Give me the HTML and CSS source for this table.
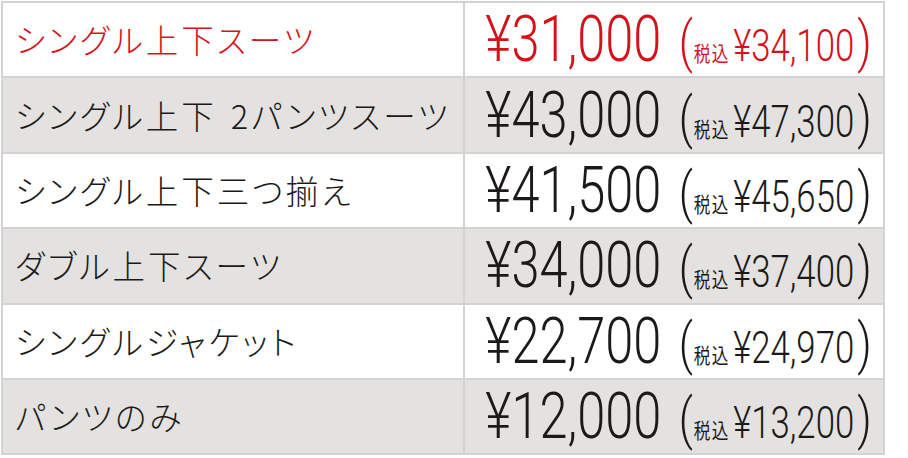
FILE: index.html
```html
<!DOCTYPE html>
<html lang="ja">
<head>
<meta charset="utf-8">
<title>価格表</title>
<link rel="stylesheet" href="styles.css">
</head>
<body>
<div class="table">
  <div class="row highlight">
    <div class="name">シングル上下スーツ</div>
    <div class="price"><div class="pgroup"><span class="main">¥31,000</span><span class="paren open">(</span><span class="zei">税込</span><span class="tax">¥34,100</span><span class="paren">)</span></div></div>
  </div>
  <div class="row alt">
    <div class="name">シングル上下<span class="gap"></span>2パンツスーツ</div>
    <div class="price"><div class="pgroup"><span class="main">¥43,000</span><span class="paren open">(</span><span class="zei">税込</span><span class="tax">¥47,300</span><span class="paren">)</span></div></div>
  </div>
  <div class="row">
    <div class="name">シングル上下三つ揃え</div>
    <div class="price"><div class="pgroup"><span class="main">¥41,500</span><span class="paren open">(</span><span class="zei">税込</span><span class="tax">¥45,650</span><span class="paren">)</span></div></div>
  </div>
  <div class="row alt">
    <div class="name">ダブル上下スーツ</div>
    <div class="price"><div class="pgroup"><span class="main">¥34,000</span><span class="paren open">(</span><span class="zei">税込</span><span class="tax">¥37,400</span><span class="paren">)</span></div></div>
  </div>
  <div class="row">
    <div class="name">シングルジャケット</div>
    <div class="price"><div class="pgroup"><span class="main">¥22,700</span><span class="paren open">(</span><span class="zei">税込</span><span class="tax">¥24,970</span><span class="paren">)</span></div></div>
  </div>
  <div class="row alt">
    <div class="name">パンツのみ</div>
    <div class="price"><div class="pgroup"><span class="main">¥12,000</span><span class="paren open">(</span><span class="zei">税込</span><span class="tax">¥13,200</span><span class="paren">)</span></div></div>
  </div>
</div>
</body>
</html>
```
FILE: styles.css
```css
html, body {
  margin: 0;
  padding: 0;
  background: #ffffff;
}

.table {
  margin: 1px 0 0 1px;
  width: 884px;
  border-top: 2px solid #d3d3d3;
  border-left: 2px solid #d3d3d3;
  box-sizing: border-box;
  color: #1c1a19;
}

.row {
  display: grid;
  grid-template-columns: 462px 1fr;
  height: 75.4px;
  background: #ffffff;
}

.row.alt {
  background: #e3e2e0;
}

.row.highlight {
  color: #d5121b;
}

.name,
.price {
  border-right: 2px solid #d3d3d3;
  border-bottom: 2px solid #d3d3d3;
  display: flex;
  align-items: center;
  overflow: hidden;
  white-space: nowrap;
}

.name {
  padding-left: 12px;
  font-family: "Noto Sans CJK JP", sans-serif;
  font-weight: 300;
  font-size: 32.5px;
  letter-spacing: 3px;
  font-feature-settings: "palt" 1;
  padding-bottom: 2px;
}

.gap {
  display: inline-block;
  width: 14px;
}

.price {
  justify-content: center;
  padding-left: 10px;
}

.pgroup {
  flex-shrink: 0;
  display: flex;
  align-items: baseline;
  font-family: Roboto, "Liberation Sans", sans-serif;
  font-weight: 300;
  transform: scaleX(0.79);
  transform-origin: center;
}

.main {
  font-size: 64px;
  line-height: 63px;
}

.tax {
  font-size: 44px;
  line-height: 44px;
}

.paren {
  font-size: 56px;
  line-height: 44px;
}

.paren.open {
  margin-left: 22px;
  margin-right: 1px;
}

.tax + .paren {
  margin-left: 4px;
}

.zei {
  display: inline-block;
  font-family: "Noto Sans CJK JP", sans-serif;
  font-weight: 400;
  font-size: 21px;
  line-height: 21px;
  letter-spacing: 2px;
  margin-right: 4px;
}
```
